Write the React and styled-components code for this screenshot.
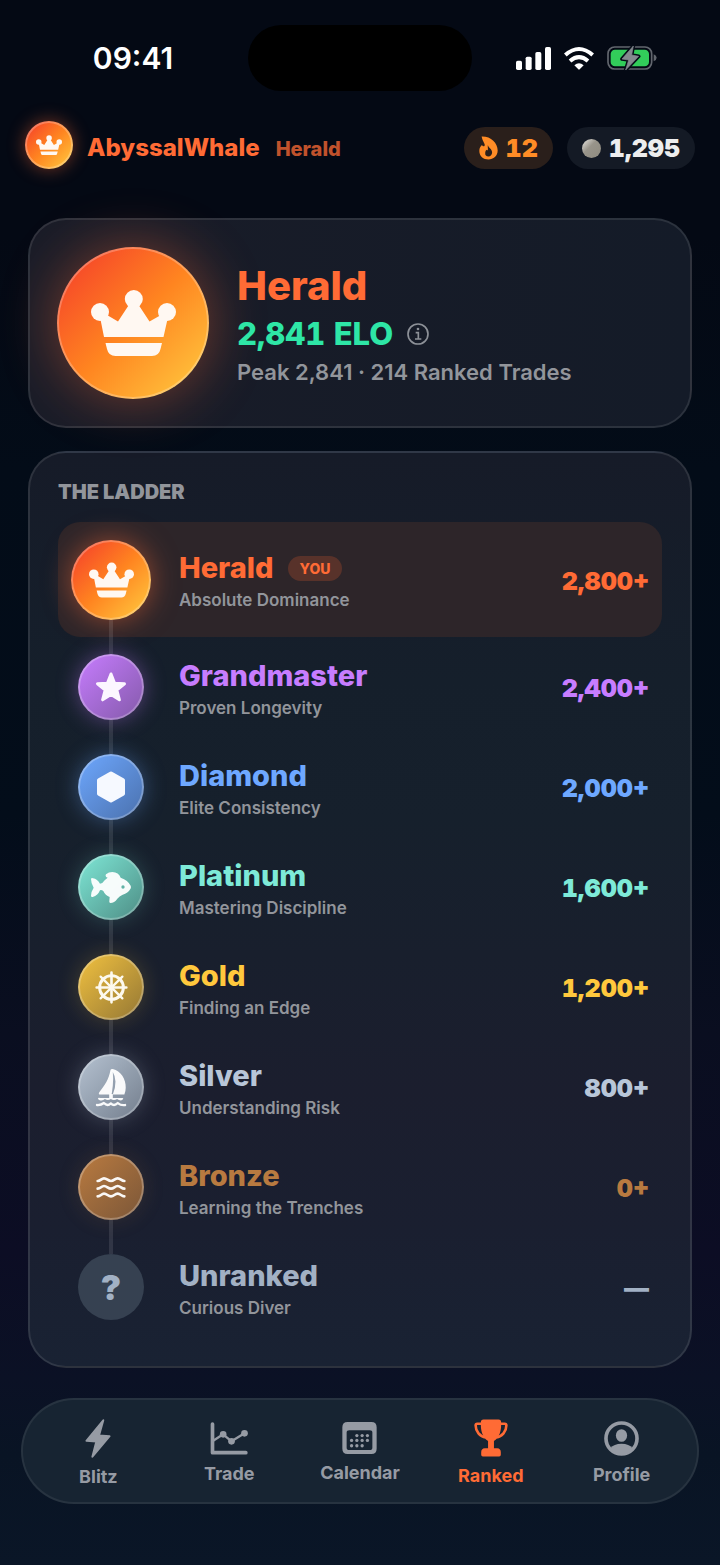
import styled, { createGlobalStyle, css } from 'styled-components';

const GlobalStyle = createGlobalStyle`
    * { box-sizing: border-box; }
    body {
        margin: 0;
        background: #040914;
        font-family: Inter, "Liberation Sans", sans-serif;
        color: #fff;
    }
    h1, h2, h3, p, ul { margin: 0; padding: 0; }
    button { font: inherit; color: inherit; border: 0; background: none; padding: 0; }
    svg { display: block; flex: none; }
`;

const Page = styled.div`
    min-height: 100vh;
    padding-top: 25px;
    padding-bottom: 61px;
    background: linear-gradient(180deg,
        #040914 0%, #040914 15%, #030c18 30%, #030d1a 52%,
        #0a0e20 66%, #0c0d24 80%, #0b1125 88%, #091424 93%, #0a1627 100%);
`;

/* ---------- status bar ---------- */

const StatusBar = styled.div`
    display: grid;
    grid-template-columns: 1fr 224px 1fr;
    align-items: center;
`;

const Time = styled.time`
    padding-left: 18px;
    text-align: center;
    font-size: 30px;
    font-weight: 600;
`;

const Island = styled.div`
    height: 66px;
    border-radius: 33px;
    background: #000;
`;

const StatusIcons = styled.div`
    display: flex;
    align-items: center;
    justify-content: center;
    gap: 12px;
    padding-right: 20px;
`;

/* ---------- header ---------- */

const Header = styled.header`
    display: flex;
    align-items: center;
    justify-content: space-between;
    padding: 30px 25px 45px;
`;

const UserBox = styled.div`
    display: flex;
    align-items: center;
    gap: 14px;
`;

const UserName = styled.div`
    display: flex;
    align-items: baseline;
    gap: 16px;
    color: #ff6b35;
    font-size: 24px;
    font-weight: 800;
    small {
        font-size: 20px;
        font-weight: 800;
        opacity: 0.75;
    }
`;

const PillGroup = styled.div`
    display: flex;
    gap: 14px;
    padding-top: 2px;
`;

const Pill = styled.div`
    display: flex;
    align-items: center;
    gap: 8px;
    height: 42px;
    padding: 0 15px;
    border-radius: 21px;
    font-size: 25px;
    font-weight: 900;
    font-variant-numeric: tabular-nums;
    color: ${({ $color }) => $color};
    background: ${({ $bg }) => $bg};
`;

const Pearl = styled.span`
    width: 19px;
    height: 19px;
    border-radius: 50%;
    background: linear-gradient(135deg, #d8d6d0 10%, #98948a 42%, #8f8b80 100%);
`;

/* ---------- medals ---------- */

const Medal = styled.span`
    display: flex;
    flex: none;
    align-items: center;
    justify-content: center;
    width: ${({ $size }) => $size}px;
    height: ${({ $size }) => $size}px;
    border-radius: 50%;
    border: ${({ $plain }) => ($plain ? 0 : '2px solid rgba(255, 255, 255, 0.25)')};
    background: ${({ $fill }) => $fill};
    background-origin: border-box;
    box-shadow: ${({ $glow }) => $glow || 'none'};
    color: rgba(255, 255, 255, 0.95);
`;

const HeaderMedal = styled(Medal)`
    margin-bottom: 4px;
`;

/* ---------- cards ---------- */

const Card = styled.section`
    margin: 0 28px;
    border: 2px solid rgba(255, 255, 255, 0.1);
    border-radius: 38px;
`;

const HeroCard = styled(Card)`
    display: flex;
    align-items: center;
    gap: 28px;
    padding: 27px;
    background: linear-gradient(90deg, #191c28, #141b28);
`;

const HeroText = styled.div`
    display: flex;
    flex-direction: column;
    padding-top: 2px;
`;

const HeroTitle = styled.h1`
    font-size: 40px;
    line-height: 50px;
    font-weight: 800;
    color: #ff6b35;
`;

const Elo = styled.div`
    display: flex;
    align-items: center;
    gap: 14px;
    font-size: 31px;
    line-height: 46px;
    font-weight: 800;
    font-variant-numeric: tabular-nums;
    color: #2ee6a6;
`;

const InfoButton = styled.button`
    color: #8d9198;
`;

const Peak = styled.p`
    font-size: 22px;
    line-height: 30px;
    font-weight: 600;
    color: #92959b;
`;

const LadderCard = styled(Card)`
    margin-top: 23px;
    padding: 27px 28px 29px;
    background: linear-gradient(180deg, #161b28 0%, #151f2b 25%, #16202c 40%, #1b1e2e 70%, #1a1f30 85%, #192233 100%);
`;

const LadderTitle = styled.h2`
    margin-bottom: 18px;
    font-size: 20px;
    line-height: 24px;
    font-weight: 900;
    color: #92959b;
`;

const Ladder = styled.ul`
    list-style: none;
`;

const Tier = styled.li`
    display: flex;
    gap: 28px;
    height: 100px;
    padding: 0 13px;
    ${({ $current }) => $current && css`
        height: 115px;
        border-radius: 22px;
        background: #2d2529;
    `}
`;

// medal with the connecting line above and below it
const Track = styled.div`
    display: flex;
    flex-direction: column;
    align-items: center;
    width: 80px;
`;

const Line = styled.span`
    flex: 1;
    width: 4px;
    background: ${({ $hidden }) => ($hidden ? 'transparent' : 'rgba(255, 255, 255, 0.1)')};
`;

const TierText = styled.div`
    flex: 1;
    display: flex;
    flex-direction: column;
    justify-content: center;
    padding-top: 5px;
`;

const TierName = styled.h3`
    display: flex;
    align-items: center;
    gap: 14px;
    font-size: 29px;
    line-height: 36px;
    font-weight: 800;
    color: ${({ $color }) => $color};
`;

const YouTag = styled.span`
    padding: 0 12px;
    border-radius: 13px;
    background: #58322a;
    font-size: 14px;
    line-height: 25px;
    font-weight: 800;
    color: #ff6b35;
`;

const TierNote = styled.p`
    font-size: 17px;
    line-height: 28px;
    font-weight: 600;
    color: #92959b;
`;

const TierValue = styled.span`
    align-self: center;
    padding-top: 2px;
    font-size: 25px;
    font-weight: 900;
    font-variant-numeric: tabular-nums;
    color: ${({ $color }) => $color};
`;

const Question = styled.span`
    font-size: 34px;
    font-weight: 900;
    color: #a2b1c4;
`;

/* ---------- bottom nav ---------- */

const NavBar = styled.nav`
    display: flex;
    height: 106px;
    margin: 30px 21px 0;
    padding: 4px 10px 0;
    border: 2px solid rgba(255, 255, 255, 0.07);
    border-radius: 53px;
    background: #172432;
`;

const NavItem = styled.button`
    flex: 1;
    display: flex;
    flex-direction: column;
    align-items: center;
    justify-content: center;
    gap: 8px;
    font-size: 18px;
    line-height: 22px;
    font-weight: 700;
    color: ${({ $active }) => ($active ? '#ff6b35' : '#969ba4')};
`;

/* ---------- icons ---------- */

const SignalIcon = () => (
    <svg width="35" height="23" viewBox="228 81 105 69" fill="#fff">
        <rect x="228" y="122" width="18" height="28" rx="5" />
        <rect x="257" y="110" width="18" height="40" rx="5" />
        <rect x="286" y="96" width="18" height="54" rx="5" />
        <rect x="315" y="81" width="18" height="69" rx="5" />
    </svg>
);

const WifiIcon = () => (
    <svg width="32" height="25" viewBox="370 77 96 75" fill="none" stroke="#fff" strokeWidth="12">
        <path d="M377 104Q418 68 459 104" />
        <path d="M391 122Q418 99 445 122" />
        <path d="M404 135Q418 123 432 135L420 147Q418 149 416 147Z" fill="#fff" stroke="none" />
    </svg>
);

const BatteryIcon = () => (
    <svg width="50" height="26" viewBox="502 76 150 78">
        <rect x="505" y="82" width="131" height="66" rx="20" fill="none" stroke="#62666e" strokeWidth="5" />
        <rect x="513" y="90" width="115" height="50" rx="13" fill="#32cd5a" />
        <path d="M642 104Q651 108 651 114Q651 121 642 125Z" fill="#62666e" />
        <path d="M581 79L547 118L567 121L558 151L597 110L576 106Z" fill="#85898f" stroke="#050b16" strokeWidth="11" strokeLinejoin="round" />
        <path d="M581 79L547 118L567 121L558 151L597 110L576 106Z" fill="#85898f" stroke="#85898f" strokeWidth="2" strokeLinejoin="round" />
    </svg>
);

const FlameIcon = () => (
    <svg width="19" height="24" viewBox="110 349 58 72" fill="currentColor" fillRule="evenodd">
        <path d="M118 350C146 349 167 369 167 393C167 410 154 420 139 420C123 420 111 410 111 394C111 386 114 381 119 376C121 380 125 381 127 378C130 373 121 366 118 350ZM137 376C139 385 150 388 150 399C150 406 145 411 139 411C132 411 128 406 129 400C129 395 131 392 133 390C134 392 136 393 137 391C138 387 136 382 137 376Z" />
    </svg>
);

const CrownIcon = ({ size }) => (
    <svg width={size} height={size * 0.8} viewBox="0 0 85 68" fill="#fff8f2">
        <circle cx="9" cy="23" r="9" />
        <circle cx="42.8" cy="10" r="9" />
        <circle cx="76" cy="23" r="9" />
        <path d="M9 28L13 48H72.5L77 28L70 26L58.5 32.5L47 15H38.5L27 32.5L16 26Z" />
        <path d="M14.5 54H71L69.5 60Q68 67 61 67H24.5Q17.5 67 16 60Z" />
    </svg>
);

const StarIcon = () => (
    <svg width="32" height="31" viewBox="-16 -16 32 31" fill="#fcf6ff">
        <path stroke="#fcf6ff" strokeWidth="3" strokeLinejoin="round" d="M0-14L3.6-4.8L13.5-4.2L5.8 2L8.4 11.8L0 6.4L-8.4 11.8L-5.8 2L-13.5-4.2L-3.6-4.8Z" />
    </svg>
);

const HexIcon = () => (
    <svg width="28" height="32" viewBox="0 0 28 32" fill="#f6f9ff">
        <path stroke="#f6f9ff" strokeWidth="4" strokeLinejoin="round" d="M14 2.5L26 9.2V22.8L14 29.5L2 22.8V9.2Z" />
    </svg>
);

const FishIcon = () => (
    <svg width="40" height="31" viewBox="93 399 120 93" fill="currentColor" fillRule="evenodd">
        <path d="M93 420Q94 416 99 418Q112 420 120 434Q128 434 134 424L143 416Q134 413 138 406Q146 399 157 399Q176 400 182 416Q204 424 212 440Q214 446 211 450Q204 463 188 467Q178 472 172 479Q163 492 151 492Q147 491 148 486L149 474Q136 470 130 456Q124 452 120 454Q114 469 98 474Q93 475 93 470Q93 458 101 446Q93 434 93 420ZM189 439A5 5 0 1 0 189 449A5 5 0 1 0 189 439Z" />
    </svg>
);

const WheelIcon = () => (
    <svg width="33" height="33" viewBox="-50 -50 100 100" fill="none" stroke="#fdf9ee" strokeLinecap="round">
        <circle r="36" strokeWidth="9" />
        <circle r="7" fill="#fdf9ee" stroke="none" />
        <path strokeWidth="8" d="M0-45V45M-45 0H45" />
        <path strokeWidth="7" d="M-33-33L33 33M-33 33L33-33" />
    </svg>
);

const BoatIcon = () => (
    <svg width="32" height="39" viewBox="105 115 95 118" fill="currentColor">
        <path d="M151 121Q152 117 158 118C182 124 198 148 197 175Q197 186 193 195H158Q166 178 166 156Q165 138 158 127Q160 150 158 168L155 192Q154 195 149 195H120Q113 195 117 188C133 169 146 149 151 121Z" />
        <path d="M147 194H158V206H187Q191 206 189 209Q187 213 182 213Q176 213 171 209Q161 215 152 209Q143 215 134 209Q128 215 120 213Q114 212 113 207Q114 204 120 206H147Z" />
        <path d="M110 227Q122 228 131 221Q142 232 152 222Q162 232 173 221Q183 229 195 227" fill="none" stroke="currentColor" strokeWidth="7" strokeLinecap="round" strokeLinejoin="round" />
    </svg>
);

const WavesIcon = () => (
    <svg width="30" height="24" viewBox="107 440 90 70" fill="none" stroke="currentColor" strokeWidth="8" strokeLinecap="round">
        {[457, 480, 503].map((y) => (
            <path key={y} d={`M112 ${y}C121 ${y} 123 ${y - 8} 131 ${y - 8}C140 ${y - 8} 143 ${y} 152 ${y}C161 ${y} 163 ${y - 8} 172 ${y - 8}C181 ${y - 8} 183 ${y} 192 ${y}`} />
        ))}
    </svg>
);

const InfoIcon = () => (
    <svg width="22" height="22" viewBox="24 39 66 66" fill="none" stroke="currentColor" strokeWidth="5">
        <circle cx="57" cy="72" r="30" />
        <path d="M50 68H58V87M48 87H67" />
        <circle cx="57" cy="57" r="4" fill="currentColor" stroke="none" />
    </svg>
);

const BlitzIcon = () => (
    <svg width="26" height="39" viewBox="195 115 78 118" fill="currentColor" stroke="currentColor" strokeWidth="6" strokeLinejoin="round">
        <path d="M250 119L199 181L229 183L217 229L269 167L237 165Z" />
    </svg>
);

const TradeIcon = () => (
    <svg width="38" height="33" viewBox="569 124 113 99" fill="none" stroke="currentColor" strokeLinejoin="round" strokeLinecap="round">
        <path strokeWidth="11" d="M576 130V216H676" />
        <path strokeWidth="7" d="M578 180L608 161L633 182L672 158" />
        <g fill="currentColor" stroke="none">
            <circle cx="608" cy="161" r="10" />
            <circle cx="633" cy="182" r="10" />
            <circle cx="672" cy="158" r="10" />
        </g>
    </svg>
);

const calendarDots = [[66, 61], [82, 61], [98, 61], [50, 76], [66, 76], [82, 76], [98, 76], [50, 92], [66, 92], [82, 92]];

const CalendarIcon = () => (
    <svg width="35" height="32" viewBox="22 20 104 97" fill="currentColor">
        <path fillRule="evenodd" d="M38 20H110Q126 20 126 36V101Q126 117 110 117H38Q22 117 22 101V36Q22 20 38 20ZM43 45Q35 45 35 52V97Q35 105 43 105H105Q113 105 113 97V52Q113 45 105 45Z" />
        {calendarDots.map(([x, y]) => <circle key={`${x}-${y}`} cx={x} cy={y} r="5" />)}
    </svg>
);

const TrophyIcon = () => (
    <svg width="34" height="38" viewBox="341 237 104 115" fill="currentColor">
        <path d="M370 238H416Q424 238 424 246C425 272 420 290 402 304V326H412Q423 327 423 338V346Q423 351 418 351H368Q363 351 363 346V338Q363 327 374 326H384V304C366 290 361 272 362 246Q362 238 370 238Z" />
        <path d="M364 251H351Q346 251 346 256C346 274 359 290 377 293M422 251H435Q440 251 440 256C440 274 427 290 409 293" fill="none" stroke="currentColor" strokeWidth="8" />
    </svg>
);

const ProfileIcon = () => (
    <svg width="35" height="35" viewBox="733 242 106 106" fill="currentColor">
        <circle cx="786" cy="295" r="47" fill="none" stroke="currentColor" strokeWidth="11" />
        <ellipse cx="786" cy="286" rx="17" ry="19" />
        <path d="M752 325Q763 311 786 311Q809 311 820 325Q806 343 786 343Q766 343 752 325Z" />
    </svg>
);

/* ---------- data ---------- */

const fire = 'linear-gradient(135deg, #f5402a 5%, #ff8420 50%, #ffcc40 98%)';

const tiers = [
    { name: 'Herald', note: 'Absolute Dominance', value: '2,800+', color: '#ff6b35', fill: fire, glow: '0 0 28px rgba(255, 107, 53, 0.5)', icon: <CrownIcon size={45} />, current: true },
    { name: 'Grandmaster', note: 'Proven Longevity', value: '2,400+', color: '#c77dff', fill: 'linear-gradient(135deg, #c77dff, #8359a9)', glow: '0 0 22px rgba(199, 125, 255, 0.38)', icon: <StarIcon /> },
    { name: 'Diamond', note: 'Elite Consistency', value: '2,000+', color: '#6ea8ff', fill: 'linear-gradient(135deg, #6ea8ff, #4a70ac)', glow: '0 0 22px rgba(110, 168, 255, 0.36)', icon: <HexIcon /> },
    { name: 'Platinum', note: 'Mastering Discipline', value: '1,600+', color: '#7eead8', fill: 'linear-gradient(135deg, #7fe8d7, #4d8c84)', glow: '0 0 22px rgba(126, 234, 216, 0.22)', icon: <FishIcon /> },
    { name: 'Gold', note: 'Finding an Edge', value: '1,200+', color: '#ffc83d', fill: 'linear-gradient(135deg, #f2c240, #937634)', glow: '0 0 22px rgba(255, 200, 61, 0.2)', icon: <WheelIcon /> },
    { name: 'Silver', note: 'Understanding Risk', value: '800+', color: '#b8c6d8', fill: 'linear-gradient(135deg, #b6c3d2, #727d8c)', glow: '0 0 22px rgba(184, 198, 216, 0.26)', icon: <BoatIcon /> },
    { name: 'Bronze', note: 'Learning the Trenches', value: '0+', color: '#b87a40', fill: 'linear-gradient(135deg, #ba7b40, #7a5638)', glow: '0 0 22px rgba(184, 122, 64, 0.16)', icon: <WavesIcon /> },
    { name: 'Unranked', note: 'Curious Diver', value: '—', color: '#a2b1c4', fill: '#364151', icon: <Question>?</Question>, plain: true },
];

const tabs = [
    { label: 'Blitz', icon: <BlitzIcon /> },
    { label: 'Trade', icon: <TradeIcon /> },
    { label: 'Calendar', icon: <CalendarIcon /> },
    { label: 'Ranked', icon: <TrophyIcon />, active: true },
    { label: 'Profile', icon: <ProfileIcon /> },
];

const TierRow = ({ tier, first, last }) => (
    <Tier $current={tier.current}>
        <Track>
            <Line $hidden={first} />
            <Medal $size={tier.current ? 80 : 66} $fill={tier.fill} $glow={tier.glow} $plain={tier.plain}>
                {tier.icon}
            </Medal>
            <Line $hidden={last} />
        </Track>
        <TierText>
            <TierName $color={tier.color}>
                {tier.name}
                {tier.current && <YouTag>YOU</YouTag>}
            </TierName>
            <TierNote>{tier.note}</TierNote>
        </TierText>
        <TierValue $color={tier.color}>{tier.value}</TierValue>
    </Tier>
);

const App = () => {
    return (
        <>
            <GlobalStyle />
            <Page>
                <StatusBar>
                    <Time>09:41</Time>
                    <Island />
                    <StatusIcons>
                        <SignalIcon />
                        <WifiIcon />
                        <BatteryIcon />
                    </StatusIcons>
                </StatusBar>

                <Header>
                    <UserBox>
                        <HeaderMedal $size={48} $fill={fire} $glow="0 0 18px rgba(255, 107, 53, 0.45)">
                            <CrownIcon size={26} />
                        </HeaderMedal>
                        <UserName>
                            AbyssalWhale
                            <small>Herald</small>
                        </UserName>
                    </UserBox>
                    <PillGroup>
                        <Pill $color="#ff8c26" $bg="#2a1f1b"><FlameIcon />12</Pill>
                        <Pill $color="#ededee" $bg="#141a25"><Pearl />1,295</Pill>
                    </PillGroup>
                </Header>

                <main>
                    <HeroCard>
                        <Medal $size={152} $fill={fire} $glow="0 0 56px rgba(255, 107, 53, 0.42)">
                            <CrownIcon size={85} />
                        </Medal>
                        <HeroText>
                            <HeroTitle>Herald</HeroTitle>
                            <Elo>
                                2,841 ELO
                                <InfoButton aria-label="About ELO"><InfoIcon /></InfoButton>
                            </Elo>
                            <Peak>Peak 2,841 · 214 Ranked Trades</Peak>
                        </HeroText>
                    </HeroCard>

                    <LadderCard>
                        <LadderTitle>THE LADDER</LadderTitle>
                        <Ladder>
                            {tiers.map((tier, i) => (
                                <TierRow key={tier.name} tier={tier} first={i === 0} last={i === tiers.length - 1} />
                            ))}
                        </Ladder>
                    </LadderCard>
                </main>

                <NavBar>
                    {tabs.map((tab) => (
                        <NavItem key={tab.label} $active={tab.active}>
                            {tab.icon}
                            {tab.label}
                        </NavItem>
                    ))}
                </NavBar>
            </Page>
        </>
    );
};

export default App;
